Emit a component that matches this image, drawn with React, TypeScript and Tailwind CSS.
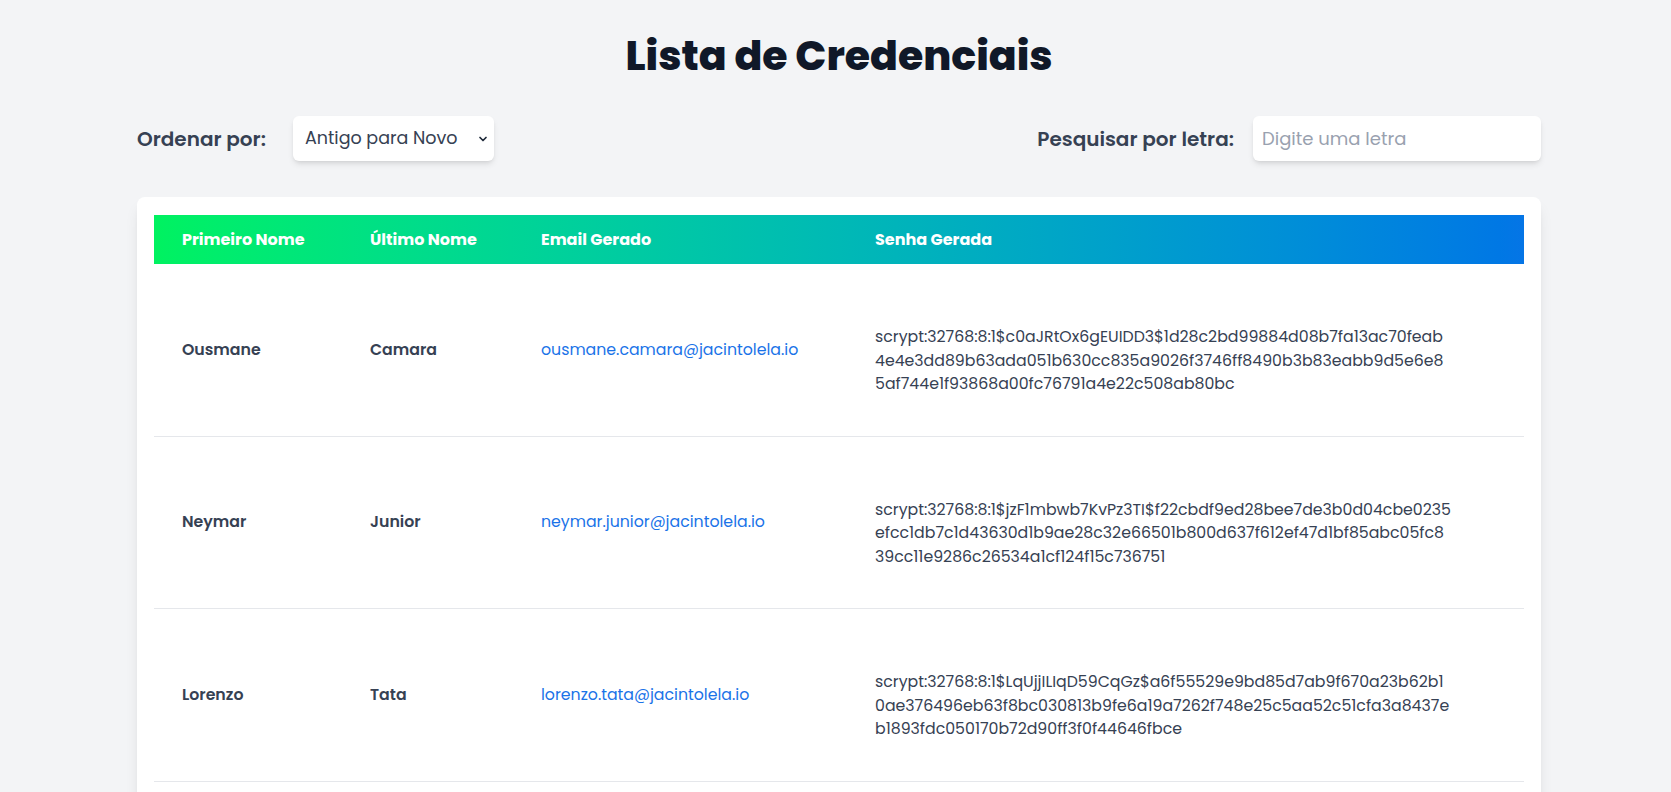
import React, { useState } from 'react'

const FONT = "font-['Poppins','Inter','Noto_Sans',sans-serif]"

const credenciais = [
  {
    primeiro: 'Ousmane',
    ultimo: 'Camara',
    email: 'ousmane.camara@jacintolela.io',
    senha:
      'scrypt:32768:8:1$c0aJRtOx6gEUIDD3$1d28c2bd99884d08b7fa13ac70feab4e4e3dd89b63ada051b630cc835a9026f3746ff8490b3b83eabb9d5e6e85af744e1f93868a00fc76791a4e22c508ab80bc',
  },
  {
    primeiro: 'Neymar',
    ultimo: 'Junior',
    email: 'neymar.junior@jacintolela.io',
    senha:
      'scrypt:32768:8:1$jzF1mbwb7KvPz3TI$f22cbdf9ed28bee7de3b0d04cbe0235efcc1db7c1d43630d1b9ae28c32e66501b800d637f612ef47d1bf85abc05fc839cc11e9286c26534a1cf124f15c736751',
  },
  {
    primeiro: 'Lorenzo',
    ultimo: 'Tata',
    email: 'lorenzo.tata@jacintolela.io',
    senha:
      'scrypt:32768:8:1$LqUjjILIqD59CqGz$a6f55529e9bd85d7ab9f670a23b62b10ae376496eb63f8bc030813b9fe6a19a7262f748e25c5aa52c51cfa3a8437eb1893fdc050170b72d90ff3f0f44646fbce',
  },
]

export default function App() {
  const [ordem, setOrdem] = useState('antigo')
  const [letra, setLetra] = useState('')

  let lista = credenciais.filter((c) =>
    letra ? c.primeiro.toLowerCase().startsWith(letra.toLowerCase()) : true
  )
  if (ordem === 'novo') lista = [...lista].reverse()

  return (
    <div className={`min-h-screen bg-gray-100 pl-[7px] ${FONT}`}>
      <div className="mx-auto max-w-[1404px] pt-[32px]">
        <h1 className="text-center text-[41px] leading-[48px] font-extrabold text-gray-900">
          Lista de Credenciais
        </h1>

        <div className="mt-[36px] flex items-center justify-between">
          <div className="flex items-center gap-[27px]">
            <label className="text-xl font-semibold text-gray-700">Ordenar por:</label>
            <div className="relative">
              <select
                value={ordem}
                onChange={(e) => setOrdem(e.target.value)}
                className="h-[45px] w-[201px] appearance-none rounded-md bg-white pl-3 pr-8 text-[17.5px] text-gray-700 shadow-md outline-none"
              >
                <option value="antigo">Antigo para Novo</option>
                <option value="novo">Novo para Antigo</option>
              </select>
              <svg
                className="pointer-events-none absolute right-[5px] top-1/2 h-[12px] w-[12px] -translate-y-1/2 text-gray-800"
                viewBox="0 0 12 12"
                fill="none"
                stroke="currentColor"
                strokeWidth="1.7"
                strokeLinecap="round"
                strokeLinejoin="round"
              >
                <path d="M3 4.5 6 7.5 9 4.5" />
              </svg>
            </div>
          </div>

          <div className="flex items-center gap-[19px]">
            <label className="text-xl font-semibold text-gray-700">Pesquisar por letra:</label>
            <input
              value={letra}
              onChange={(e) => setLetra(e.target.value)}
              placeholder="Digite uma letra"
              className="h-[45px] w-[288px] rounded-md bg-white px-[9px] text-lg text-gray-700 shadow-md outline-none placeholder:text-gray-400"
            />
          </div>
        </div>

        <div className="mt-9 rounded-lg bg-white px-[17px] pt-[18px] pb-6 shadow-lg">
          <div className="grid h-[49px] grid-cols-[187px_171px_334px_1fr] items-center bg-gradient-to-r from-[#00F260] to-[#0575E6] text-base font-bold text-white">
            <div className="pl-[28px]">Primeiro Nome</div>
            <div className="pl-[29px]">Último Nome</div>
            <div className="pl-[29px]">Email Gerado</div>
            <div className="pl-[29px]">Senha Gerada</div>
          </div>

          {lista.map((c) => (
            <div
              key={c.email}
              className="grid grid-cols-[187px_171px_334px_1fr] items-center border-b border-gray-200 py-[40px]"
            >
              <div className="pl-[28px] text-[15.75px] font-semibold text-gray-700">{c.primeiro}</div>
              <div className="pl-[29px] text-[15.75px] font-semibold text-gray-700">{c.ultimo}</div>
              <div className="pl-[29px] text-[15.75px] text-[#1a73e8]">{c.email}</div>
              <div className="pl-[29px] pt-[21px]">
                <p className="max-w-[577px] break-all text-[15.75px] leading-[23.5px] text-gray-700">
                  {c.senha}
                </p>
              </div>
            </div>
          ))}
        </div>
      </div>
    </div>
  )
}
